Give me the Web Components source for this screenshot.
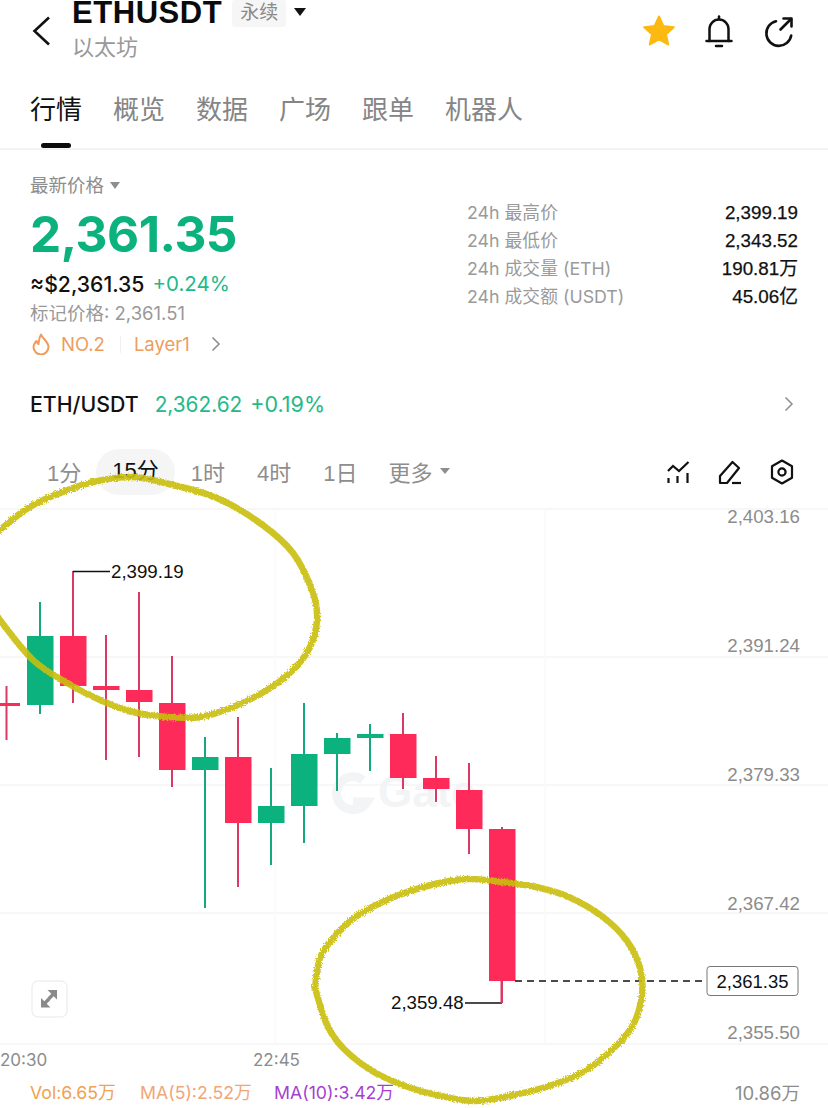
<!DOCTYPE html>
<html lang="zh">
<head>
<meta charset="utf-8">
<title>ETHUSDT</title>
<style>
  html, body { margin: 0; height: 1108px; overflow: hidden; background: #fff; }
  body { font-family: Inter, "Noto Sans CJK SC", sans-serif; color: #111; }
</style>
</head>
<body>
<app-root>
  <top-bar symbol="ETHUSDT" kind="永续" name="以太坊"></top-bar>
  <tab-bar>
    <tab-item active>行情</tab-item>
    <tab-item>概览</tab-item>
    <tab-item>数据</tab-item>
    <tab-item>广场</tab-item>
    <tab-item>跟单</tab-item>
    <tab-item>机器人</tab-item>
  </tab-bar>
  <price-panel>
    <stat-row label="24h 最高价">2,399.19</stat-row>
    <stat-row label="24h 最低价">2,343.52</stat-row>
    <stat-row label="24h 成交量 (ETH)">190.81万</stat-row>
    <stat-row label="24h 成交额 (USDT)">45.06亿</stat-row>
  </price-panel>
  <pair-row></pair-row>
  <time-bar></time-bar>
  <kline-chart></kline-chart>
  <volume-legend></volume-legend>
  <marker-rings></marker-rings>
</app-root>

<script>
class AppRoot extends HTMLElement {
  constructor () {
    super();
    this.attachShadow({ mode: "open" });
  }
  connectedCallback () {
    this.shadowRoot.innerHTML = `
      <style>
        :host { display: block; position: relative; width: 828px; height: 1108px; overflow: hidden; }
      </style>
      <slot></slot>
    `;
  }
}

class TopBar extends HTMLElement {
  constructor () {
    super();
    this.attachShadow({ mode: "open" });
  }
  connectedCallback () {
    this.shadowRoot.innerHTML = `
      <style>
        :host { display: flex; align-items: flex-start; height: 73px; padding: 0 32px 0 32px; box-sizing: border-box; }
        .back { margin-top: 16px; flex: none; }
        .info { margin-left: 20px; flex: 1; }
        .line { display: flex; align-items: flex-start; height: 27px; }
        .symbol { font-family: "Liberation Sans", sans-serif; font-size: 31px; font-weight: 700; line-height: 26px; letter-spacing: .55px; color: #0b0b0b; }
        .kind { margin-left: 10px; height: 27px; line-height: 25px; padding: 0 8px; background: #f6f6f6; border-radius: 3px; font-size: 19px; color: #8a8a8a; }
        .arrow { margin: 8px 0 0 8px; width: 0; height: 0; border-left: 6.5px solid transparent; border-right: 6.5px solid transparent; border-top: 8px solid #111; }
        .name { font-size: 22px; line-height: 28px; color: #999; margin-top: 6px; }
        .icons { display: flex; gap: 26px; margin-top: 14px; align-items: center; }
      </style>
      <svg class="back" width="20" height="30" viewBox="0 0 20 30" fill="none" stroke="#111" stroke-width="2.6">
        <path d="M17 1.5 2.5 15 17 28.500"/>
      </svg>
      <div class="info">
        <div class="line">
          <span class="symbol">${this.getAttribute("symbol")}</span>
          <span class="kind">${this.getAttribute("kind")}</span>
          <span class="arrow"></span>
        </div>
        <div class="name">${this.getAttribute("name")}</div>
      </div>
      <div class="icons">
        <svg width="34" height="34" viewBox="0 0 34 34">
          <path fill="#fcb912" stroke="#fcb912" stroke-width="2" stroke-linejoin="round" d="M17 2.500 21.300 12 31.800 13.200 24 20.200 26.200 30.500 17 25.300 7.800 30.500 10 20.200 2.200 13.200 12.700 12Z"/>
        </svg>
        <svg width="34" height="34" viewBox="0 0 34 34" fill="none" stroke="#111" stroke-width="2.500" stroke-linecap="round">
          <path d="M17 2.500V5"/>
          <path d="M7.500 27V15a9.500 9.500 0 0 1 19 0V27"/>
          <path d="M4.500 27h25"/>
          <path d="M14 32h6"/>
        </svg>
        <svg width="34" height="34" viewBox="0 0 34 34" fill="none" stroke="#111" stroke-width="2.600" stroke-linecap="round" stroke-linejoin="round">
          <path d="M14 7.200A12.500 12.500 0 1 0 29.200 21.500"/>
          <path d="M18.500 15.500 29 5"/>
          <path d="M21.500 4.500h8v8"/>
        </svg>
      </div>
    `;
  }
}

class TabBar extends HTMLElement {
  constructor () {
    super();
    this.attachShadow({ mode: "open" });
  }
  connectedCallback () {
    this.shadowRoot.innerHTML = `
      <style>
        :host { display: flex; gap: 31px; height: 77px; box-sizing: border-box; padding: 20px 0 0 30px; border-bottom: 2px solid #f3f3f3; }
      </style>
      <slot></slot>
    `;
  }
}

class TabItem extends HTMLElement {
  constructor () {
    super();
    this.attachShadow({ mode: "open" });
  }
  connectedCallback () {
    this.shadowRoot.innerHTML = `
      <style>
        :host { display: block; font-size: 26px; line-height: 34px; color: #858585; }
        :host([active]) { color: #111; }
        :host([active])::after { content: ""; display: block; width: 30px; height: 5px; margin: 16px auto 0; background: #0b0b0b; border-radius: 3px; }
      </style>
      <slot></slot>
    `;
  }
}

class PricePanel extends HTMLElement {
  constructor () {
    super();
    this.attachShadow({ mode: "open" });
  }
  connectedCallback () {
    this.shadowRoot.innerHTML = `
      <style>
        :host { display: flex; justify-content: space-between; padding: 23px 30px 0 30px; }
        .label { display: flex; align-items: center; font-size: 18.500px; line-height: 24px; color: #8e8e8e; }
        .label i { margin-left: 6px; border-left: 5.500px solid transparent; border-right: 5.500px solid transparent; border-top: 7px solid #8e8e8e; }
        .price { font-size: 49.500px; font-weight: 700; line-height: 50px; margin-top: 12px; color: #0cb27e; letter-spacing: -.5px; }
        .sub { display: flex; gap: 8px; font-size: 21.200px; line-height: 28px; margin-top: 11px; font-weight: 500; color: #111; }
        .sub span { color: #23b98a; font-weight: 400; font-size: 20.500px; }
        .mark { font-size: 18.500px; line-height: 24px; margin-top: 3px; color: #999; }
        .tags { display: flex; align-items: center; height: 24px; margin-top: 7px; font-size: 18.500px; color: #ee9c5e; }
        .tags .no { margin-left: 11px; }
        .tags b { width: 1px; height: 17px; background: #f1f1f1; margin: 0 13px 0 15px; }
        .tags svg.go { margin-left: 21px; }
        .flame { margin-left: 2px; }
        .right { width: 331px; margin-top: 26px; }
      </style>
      <div class="left">
        <div class="label">最新价格<i></i></div>
        <div class="price">2,361.35</div>
        <div class="sub">≈$2,361.35 <span>+0.24%</span></div>
        <div class="mark">标记价格: 2,361.51</div>
        <div class="tags">
          <svg class="flame" width="18" height="22" viewBox="0 0 18 22" fill="none" stroke="#ee9c5e" stroke-width="2" stroke-linejoin="round">
            <path d="M9 1.500C10 5.500 16.500 8.500 16.500 14A7.500 7.500 0 0 1 1.500 14C1.500 11 3.200 9.500 4.500 8C5 9.500 5.500 10.500 6.500 11C7 7.500 7 4.500 9 1.500Z"/>
          </svg>
          <span class="no">NO.2</span><b></b><span>Layer1</span>
          <svg class="go" width="10" height="16" viewBox="0 0 10 16" fill="none" stroke="#8e8e8e" stroke-width="1.600"><path d="M1.500 1.500 8 8 1.500 14.500"/></svg>
        </div>
      </div>
      <div class="right"><slot></slot></div>
    `;
  }
}

class StatRow extends HTMLElement {
  constructor () {
    super();
    this.attachShadow({ mode: "open" });
  }
  connectedCallback () {
    this.shadowRoot.innerHTML = `
      <style>
        :host { display: flex; justify-content: space-between; height: 28px; line-height: 28px; font-size: 17.800px; }
        .k { color: #9a9a9a; }
        .v { color: #111; font-family: "Liberation Sans", "Noto Sans CJK SC", sans-serif; font-size: 18.800px; -webkit-text-stroke: .25px #111; }
      </style>
      <span class="k">${this.getAttribute("label")}</span>
      <span class="v"><slot></slot></span>
    `;
  }
}

class PairRow extends HTMLElement {
  constructor () {
    super();
    this.attachShadow({ mode: "open" });
  }
  connectedCallback () {
    this.shadowRoot.innerHTML = `
      <style>
        :host { display: flex; align-items: center; height: 28px; margin-top: 34px; padding: 0 34px 0 30px; font-size: 21.300px; }
        .name { color: #111; font-weight: 500; }
        .num { color: #23b98a; margin-left: 16px; font-size: 20.800px; }
        .pct { color: #23b98a; margin-left: 8px; flex: 1; font-size: 21.500px; }
      </style>
      <span class="name">ETH/USDT</span>
      <span class="num">2,362.62</span>
      <span class="pct">+0.19%</span>
      <svg width="10" height="16" viewBox="0 0 10 16" fill="none" stroke="#8e8e8e" stroke-width="1.500"><path d="M1.500 1.500 8 8 1.500 14.500"/></svg>
    `;
  }
}

class TimeBar extends HTMLElement {
  constructor () {
    super();
    this.attachShadow({ mode: "open" });
  }
  connectedCallback () {
    this.shadowRoot.innerHTML = `
      <style>
        :host { display: flex; align-items: center; height: 46px; margin-top: 31px; padding: 0 33px 0 47px; font-family: "Liberation Sans", "Noto Sans CJK SC", sans-serif; font-size: 22px; color: #8e8e8e; }
        span { flex: none; margin-top: -3px; }
        .on { color: #111; background: #f5f5f5; border-radius: 23px; padding: 0 16px; height: 46px; line-height: 43px; margin: 0 16px 0 15px; }
        .gap { margin-left: 32px; }
        .more { display: flex; align-items: center; margin: -3px 0 0 31px; flex: 1; }
        .more i { margin-left: 7px; border-left: 5px solid transparent; border-right: 5px solid transparent; border-top: 6.500px solid #8e8e8e; }
        .tools { display: flex; gap: 26px; }
      </style>
      <span>1分</span>
      <span class="on">15分</span>
      <span>1时</span>
      <span class="gap">4时</span>
      <span class="gap">1日</span>
      <div class="more">更多<i></i></div>
      <div class="tools">
        <svg width="26" height="26" viewBox="0 0 26 26" fill="none" stroke="#111" stroke-width="2.200">
          <path d="M3 12 8 7 14 12 23.500 3"/>
          <path d="M3.500 19v5M12.500 17v7M22.500 14v10"/>
        </svg>
        <svg width="26" height="26" viewBox="0 0 26 26" fill="none" stroke="#111" stroke-width="2.200" stroke-linejoin="round">
          <path d="M3 24V17L15.500 3 22 9 10 24Z"/>
          <path d="M15 24h9"/>
        </svg>
        <svg width="26" height="26" viewBox="0 0 26 26" fill="none" stroke="#111" stroke-width="2.200" stroke-linejoin="round">
          <path d="M13 1.500 23 7.200V18.800L13 24.500 3 18.800V7.200Z"/>
          <circle cx="13" cy="13" r="3.600"/>
        </svg>
      </div>
    `;
  }
}

// vela: [x, wickTop, wickBottom, bodyTop, bodyBottom, sube]
const CANDLES = [
  [6.500, 686, 740, 703, 706, 0], [40, 602, 714, 636, 705, 1], [73, 571, 703, 636, 686, 0],
  [106, 635, 760, 686, 690, 0], [139, 592, 757, 690, 702, 0], [172, 656, 787, 703, 770, 0],
  [205, 737, 908, 757, 770, 1], [238, 717, 887, 757, 823, 0], [271, 768, 865, 806, 823, 1],
  [304, 703, 843, 754, 806, 1], [337, 733, 791, 738, 754, 1], [370, 724, 771, 734, 738, 1],
  [403, 713, 789, 734, 778, 0], [436, 756, 802, 778, 789, 0], [469, 763, 854, 790, 829, 0],
  [502, 827, 1003, 829, 981, 0]
];

class KlineChart extends HTMLElement {
  constructor () {
    super();
    this.attachShadow({ mode: "open" });
  }
  candles () {
    return CANDLES.map(([x, t, b, bt, bb, up]) => {
      const c = up ? "#0cb27e" : "#fe2b5a";
      const wick = up ? "#17a77c" : "#d93a63";
      return `<path d="M${x} ${t}V${b}" stroke="${wick}" stroke-width="2"/>
        <rect x="${x - 13}" y="${bt}" width="26.500" height="${bb - bt}" fill="${c}"/>`;
    }).join("");
  }
  connectedCallback () {
    const grid = [509, 657, 785, 913, 1044].map(y => `<path d="M0 ${y}H828" stroke="#f5f5f5" stroke-width="1.500"/>`).join("");
    const axis = [["2,403.16", 517], ["2,391.24", 646], ["2,379.33", 775], ["2,367.42", 904], ["2,355.50", 1033]]
      .map(([t, y]) => `<text x="800" y="${y + 5.5}" text-anchor="end" font-size="18.700" fill="#8c8c8c">${t}</text>`).join("");
    this.shadowRoot.innerHTML = `
      <style>
        :host { display: block; height: 577px; font-family: "Liberation Sans", "Noto Sans CJK SC", sans-serif; }
        svg { display: block; }
      </style>
      <svg width="828" height="577" viewBox="0 495 828 577">
        ${grid}
        <path d="M275 509V1044M545 509V1044" stroke="#fafafa" stroke-width="1.500"/>
        <g fill="none" stroke="#f2f4f6" stroke-width="9">
          <path d="M363 780A16.500 16.500 0 1 0 367 802H353"/>
        </g>
        <text x="378" y="807" font-size="44" font-weight="700" fill="#f3f4f6">Gate</text>
        ${axis}
        ${this.candles()}
        <path d="M73 571.500H110M465 1003H502" stroke="#111" stroke-width="1.500"/>
        <path d="M501.500 981V1003" stroke="#d93a63" stroke-width="2"/>
        <text x="111" y="578" font-size="18.700" fill="#111">2,399.19</text>
        <text x="391" y="1008.500" font-size="18.700" fill="#111">2,359.48</text>
        <path d="M515 981H707" stroke="#111" stroke-width="1.400" stroke-dasharray="7 5"/>
        <rect x="707" y="966.500" width="91" height="29" rx="3" fill="#fff" stroke="#777" stroke-width="1"/>
        <text x="752.500" y="987.500" text-anchor="middle" font-size="18.500" fill="#111">2,361.35</text>
        <rect x="32" y="981" width="35" height="36" rx="6" fill="#fff" stroke="#f0f0f0" stroke-width="1.500"/>
        <g fill="#8a8a8a">
          <path d="M47.500 990H57V999.500L53.700 996.200 50 999.900 47.600 997.500 51.300 993.800Z"/>
          <path d="M50.500 1007.500H41V998L44.300 1001.300 48 997.600 50.400 1000 46.700 1003.700Z"/>
        </g>
        <text x="0" y="1065.500" font-size="17" fill="#8c8c8c" font-family="Inter">20:30</text>
        <text x="253" y="1065.500" font-size="17" fill="#8c8c8c" font-family="Inter">22:45</text>
      </svg>
    `;
  }
}

class VolumeLegend extends HTMLElement {
  constructor () {
    super();
    this.attachShadow({ mode: "open" });
  }
  connectedCallback () {
    this.shadowRoot.innerHTML = `
      <style>
        :host { display: flex; height: 36px; padding: 4px 28px 0 30px; box-sizing: border-box; line-height: 34px; font-size: 17.700px; }
        .vol { color: #f0a24e; width: 110px; }
        .ma5 { color: #f0a678; width: 134px; }
        .ma10 { color: #a63fd0; flex: 1; }
        .total { color: #8c8c8c; font-size: 18.500px; }
      </style>
      <span class="vol">Vol:6.65万</span>
      <span class="ma5">MA(5):2.52万</span>
      <span class="ma10">MA(10):3.42万</span>
      <span class="total">10.86万</span>
    `;
  }
}

// los dos circulos dibujados a mano sobre la captura
const RING_TOP = [[-12,540],[0,530],[25,510],[50,497],[93,482],[133,477],[173,485],[217,498],[260,523],[293,553],[313,593],[317,620],[310,647],[293,670],[267,690],[233,707],[200,717],[167,717],[133,712],[100,700],[67,683],[33,660],[0,620],[-12,600]];
const RING_BOTTOM = [[315,988],[320,958],[334,937],[357,916],[394,897],[435,884],[468,879],[502,882],[536,887],[569,897],[603,917],[627,941],[640,968],[642,995],[633,1025],[613,1049],[583,1072],[549,1086],[509,1096],[475,1101],[441,1096],[408,1087],[374,1072],[344,1049],[327,1025],[315,988]];

class MarkerRings extends HTMLElement {
  constructor () {
    super();
    this.attachShadow({ mode: "open" });
  }
  smooth (pts) {
    let d = `M${pts[0][0]} ${pts[0][1]}`;
    for (let i = 0; i < pts.length - 1; i++) {
      const p0 = pts[Math.max(i - 1, 0)], p1 = pts[i], p2 = pts[i + 1], p3 = pts[Math.min(i + 2, pts.length - 1)];
      const c1 = [p1[0] + (p2[0] - p0[0]) / 6, p1[1] + (p2[1] - p0[1]) / 6];
      const c2 = [p2[0] - (p3[0] - p1[0]) / 6, p2[1] - (p3[1] - p1[1]) / 6];
      d += `C${c1[0]} ${c1[1]} ${c2[0]} ${c2[1]} ${p2[0]} ${p2[1]}`;
    }
    return d;
  }
  connectedCallback () {
    this.shadowRoot.innerHTML = `
      <style>
        :host { position: absolute; left: 0; top: 0; width: 828px; height: 1108px; pointer-events: none; }
        svg { display: block; }
      </style>
      <svg width="828" height="1108" viewBox="0 0 828 1108">
        <defs>
          <filter id="rough" x="-5%" y="-5%" width="110%" height="110%">
            <feTurbulence type="fractalNoise" baseFrequency="0.7" numOctaves="3" seed="4"/>
            <feDisplacementMap in="SourceGraphic" scale="4"/>
            <feGaussianBlur stdDeviation=".35"/>
          </filter>
        </defs>
        <g fill="none" stroke="#c9bf0c" stroke-width="6.500" stroke-linecap="round" filter="url(#rough)" opacity=".9">
          <path d="${this.smooth(RING_TOP)}"/>
          <path d="${this.smooth(RING_BOTTOM)}"/>
        </g>
      </svg>
    `;
  }
}

customElements.define('app-root', AppRoot);
customElements.define('top-bar', TopBar);
customElements.define('tab-bar', TabBar);
customElements.define('tab-item', TabItem);
customElements.define('price-panel', PricePanel);
customElements.define('stat-row', StatRow);
customElements.define('pair-row', PairRow);
customElements.define('time-bar', TimeBar);
customElements.define('kline-chart', KlineChart);
customElements.define('volume-legend', VolumeLegend);
customElements.define('marker-rings', MarkerRings);
</script>
</body>
</html>
